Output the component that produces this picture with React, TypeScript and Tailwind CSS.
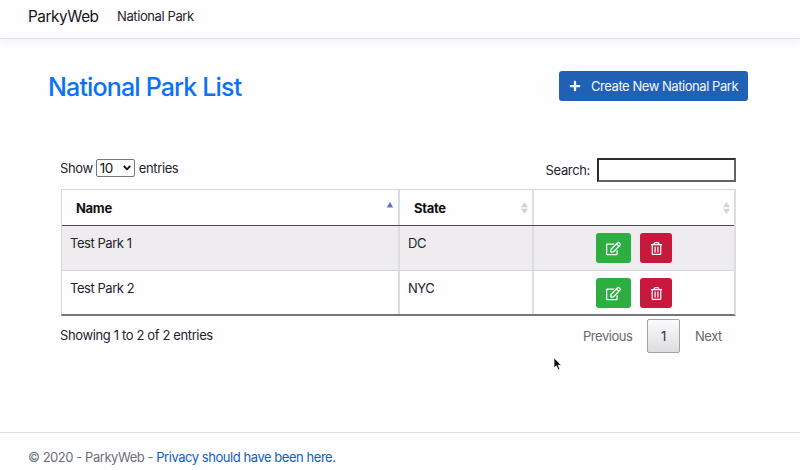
import { FaPlus, FaRegEdit, FaRegTrashAlt } from "react-icons/fa";

const parks = [
  { name: "Test Park 1", state: "DC" },
  { name: "Test Park 2", state: "NYC" },
];

function SortIcon() {
  return (
    <svg width="7" height="12" viewBox="0 0 7 12" fill="#d3d2d7">
      <path d="M3.5 0 L7 5.3 H0Z" />
      <path d="M3.5 12 L7 6.7 H0Z" />
    </svg>
  );
}

function Row({ name, state, shaded }: { name: string; state: string; shaded: boolean }) {
  return (
    <div className={`flex ${shaded ? "h-[45px] border-b border-[#d5d6dc] bg-[#eeecef]" : "h-[43px] bg-[#fefdff]"}`}>
      <div className="w-[338px] border-r-2 border-[#dcdde0] pt-[7px] pl-[8px]">{name}</div>
      <div className="w-[134px] border-r-2 border-[#dcdde0] pt-[7px] pl-[8px]">{state}</div>
      <div className="flex flex-1 items-start justify-center gap-[9px] pt-[7px]">
        <button className="flex h-[30px] w-[35px] items-center justify-center rounded-[3px] bg-[#2dae41] text-white">
          <FaRegEdit size={15} />
        </button>
        <button className="flex h-[30px] w-[32px] items-center justify-center rounded-[3px] bg-[#c8193c] text-white">
          <FaRegTrashAlt size={13} />
        </button>
      </div>
    </div>
  );
}

export default function App() {
  return (
    <div className="relative flex h-[470px] w-[800px] flex-col overflow-hidden bg-[#fefdff] font-['Inter','Liberation_Sans',sans-serif] text-[13px] leading-[20px] tracking-[-0.45px] text-[#242328]">
      <header className="flex h-[39px] shrink-0 items-center border-b border-[#e2e1e4] pb-[6px] pl-[28px] shadow-[0_3px_9px_rgba(0,0,0,0.05)]">
        <a className="w-[89px] pt-[1px] text-[15.3px] tracking-[-0.42px] text-[#151417]">ParkyWeb</a>
        <a className="tracking-[-0.4px]">National Park</a>
      </header>

      <main className="flex h-[393px] shrink-0 flex-col pt-[32px] pr-[52px] pl-[48px]">
        <div className="flex h-[30px] items-center justify-between">
          <h2 className="pt-[1px] text-[25px] leading-[30px] font-medium tracking-[-0.84px] text-[#0b72f5]">National Park List</h2>
          <button className="flex h-[30px] w-[189px] items-center rounded-[3px] bg-[#2161b5] pl-[10px] text-[#f4f8ff]">
            <FaPlus size={12} />
            <span className="pl-[10px] whitespace-nowrap">Create New National Park</span>
          </button>
        </div>

        <div className="mt-[57px] mr-[12px] ml-[12px] flex h-[24px] justify-between">
          <label className="flex h-[20px] items-center gap-[4px] tracking-[-0.37px]">
            Show
            <span className="-ml-px flex h-[18px] w-[39px] items-center justify-between rounded-[2px] border border-[#77767a] bg-white pr-[3px] pl-[3px] text-[13.5px] text-[#111]">
              10
              <svg width="8" height="6" viewBox="0 0 8 6" fill="none" stroke="#111" strokeWidth="1.8">
                <path d="M0.8 1 L4 4.3 L7.2 1" />
              </svg>
            </span>
            entries
          </label>
          <label className="flex h-[24px] items-center gap-[7px] tracking-[-0.35px]">
            Search:
            <input className="h-[24px] w-[139px] border-2 border-t-[#2f2d33] border-r-[#626167] border-b-[#626167] border-l-[#2f2d33] bg-white outline-none" />
          </label>
        </div>

        <div className="mt-[7px] ml-[13px] h-[127px] w-[675px] border-t border-r-2 border-b-2 border-l border-t-[#d6d7da] border-r-[#dcdde0] border-b-[#77757b] border-l-[#d6d7da]">
          <div className="flex h-[36px] items-center border-b border-[#4a484e] font-bold tracking-[-0.3px] text-[#121114]">
            <div className="flex h-full w-[338px] items-center justify-between border-r-2 border-[#dcdde0] pr-[5px] pl-[14px]">
              Name
              <svg width="6" height="6" viewBox="0 0 6 6" className="mb-[5px]">
                <path d="M3 0 L6 5 H0Z" fill="#4c7fd0" />
                <path d="M0 5 H6 V6 H0Z" fill="#e7a5b8" />
              </svg>
            </div>
            <div className="flex h-full w-[134px] items-center justify-between border-r-2 border-[#dcdde0] pr-[4px] pl-[14px]">
              State
              <SortIcon />
            </div>
            <div className="flex h-full flex-1 items-center justify-end pr-[4px]">
              <SortIcon />
            </div>
          </div>
          {parks.map((p, i) => (
            <Row key={p.name} name={p.name} state={p.state} shaded={i === 0} />
          ))}
        </div>

        <div className="mr-[12px] ml-[12px] flex h-[40px] justify-between">
          <div className="pt-[9px] tracking-[-0.37px]">Showing 1 to 2 of 2 entries</div>
          <div className="mt-[3px] flex h-[34px] items-center text-[#69686d]">
            <span className="w-[64px]">Previous</span>
            <span className="flex h-[34px] w-[33px] items-center justify-center rounded-[2px] border border-[#a3a2a6] bg-linear-to-b from-[#fbfafc] to-[#dddcdf] text-[#333237]">1</span>
            <span className="w-[56px] pl-[15px]">Next</span>
          </div>
        </div>
      </main>

      <footer className="h-[38px] shrink-0 border-t border-[#dfdee1] pt-[14px] pl-[28px] text-[#6b7076]">
        © 2020 - ParkyWeb - <a className="text-[#0f5fc4]">Privacy should have been here.</a>
      </footer>

      <svg className="absolute top-[357px] left-[553px]" width="9" height="14" viewBox="0 0 9 14">
        <path d="M1 0.8 V10.8 L3.3 8.8 L5 12.8 L6.8 12 L5.1 8.2 H8.3Z" fill="#0c0c0d" stroke="#fff" strokeWidth="0.7" />
      </svg>
    </div>
  );
}
